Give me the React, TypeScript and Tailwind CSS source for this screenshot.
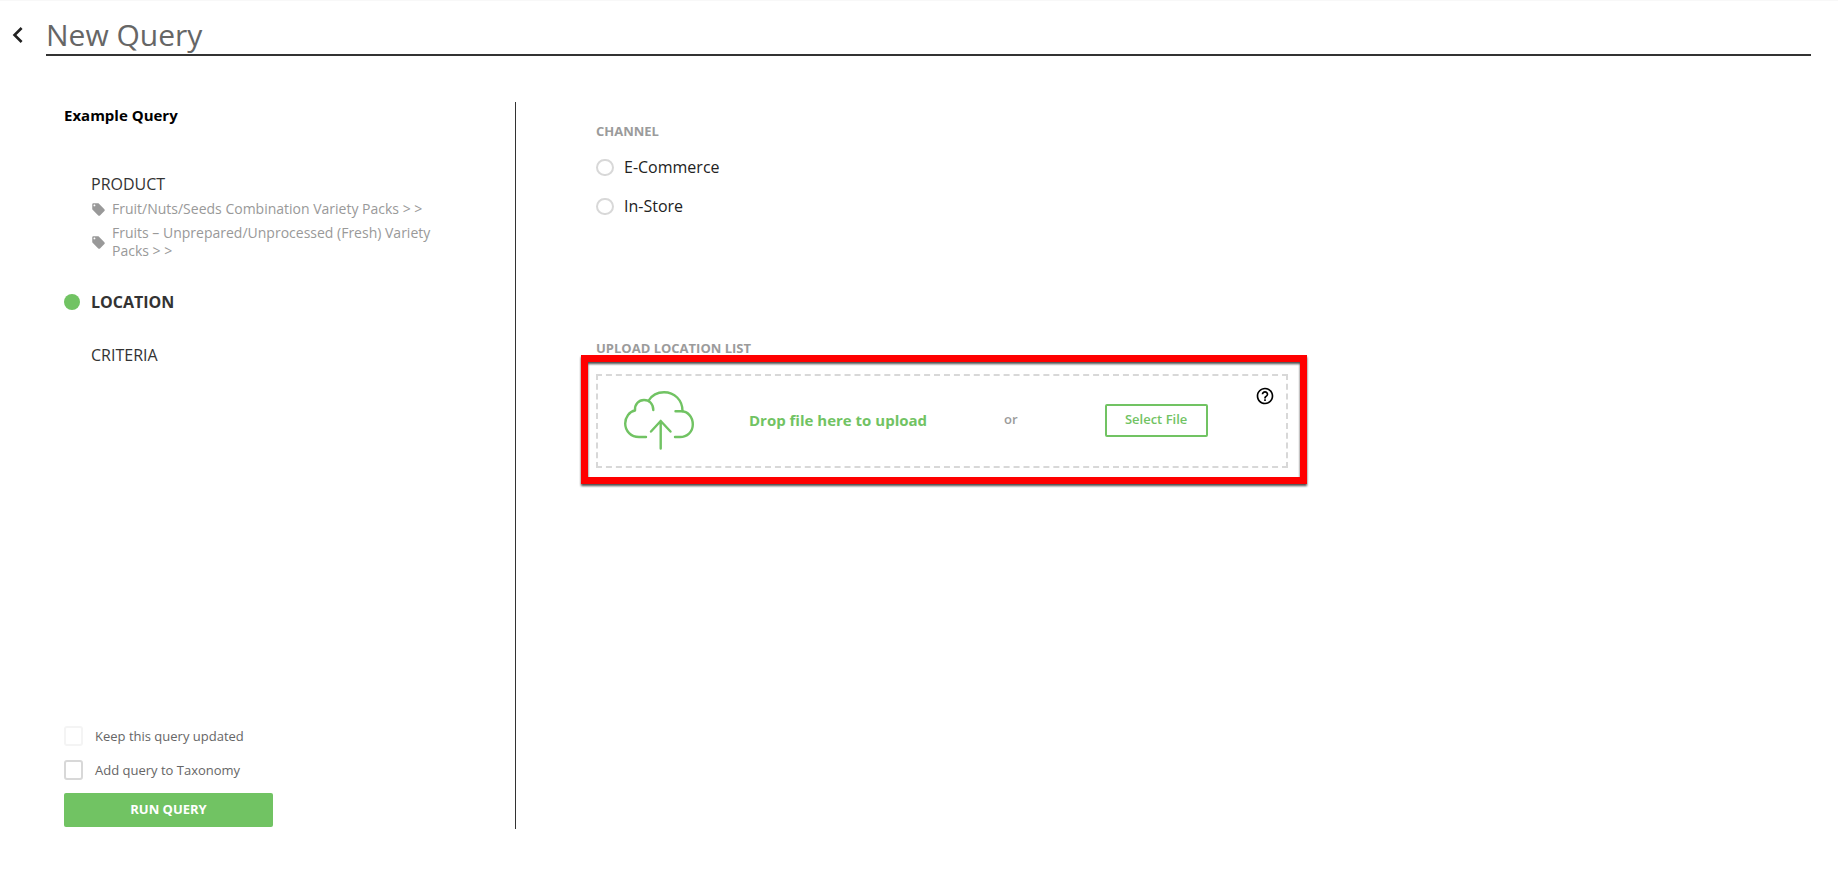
import type { FC, ReactNode } from "react";
import { MdChevronLeft, MdHelpOutline, MdLocalOffer } from "react-icons/md";

const CloudUploadIcon: FC = () => (
  <svg
    width="70"
    height="59"
    viewBox="0 0 70 59"
    fill="none"
    stroke="currentColor"
    strokeWidth="2.4"
    strokeLinecap="round"
    strokeLinejoin="round"
    aria-hidden="true"
  >
    <path d="M22 46H15C7 46 1.2 40 1.2 32.500C1.200 26 5.500 20.500 11 19.500C10.500 13.500 14.500 9 20 9C25.500 9 29.300 13 29.300 19" />
    <path d="M24.700 9.500C28 4 33.500 1.200 40 1.200C50.500 1.200 58.500 9 58.500 20" />
    <path d="M51.500 20.300H57C64 20.300 68.800 26 68.800 33.500C68.800 41 63 46 56 46H51" />
    <path d="M36.700 57.500V30M27 40.500L36.700 30L46.500 40.500" />
  </svg>
);

const SectionTitle: FC<{ children: ReactNode }> = ({ children }) => (
  <h2 className="text-[13px] leading-5 font-bold text-[#9b9b9b] uppercase">{children}</h2>
);

const Tag: FC<{ children: ReactNode }> = ({ children }) => (
  <li className="flex items-center gap-1.5 text-sm leading-[18px] text-[#999999]">
    <MdLocalOffer className="size-[15px] flex-none" />
    <span>{children}</span>
  </li>
);

const CheckOption: FC<{ label: string; disabled?: boolean }> = ({ label, disabled }) => (
  <label className="flex items-center gap-3 text-[13px] leading-5 text-[#666666]">
    <input
      type="checkbox"
      disabled={disabled}
      className="h-5 w-[19px] appearance-none rounded-[3px] border-2 border-[#d8d8d8] checked:bg-[#71c363] disabled:border-[#f4f4f4]"
    />
    {label}
  </label>
);

const RadioOption: FC<{ label: string }> = ({ label }) => (
  <label className="flex items-center gap-2.5 text-base leading-5 text-[#222222]">
    <input
      type="radio"
      name="channel"
      className="h-[17px] w-[18px] appearance-none rounded-full border-2 border-[#d8d8d8] checked:bg-[#71c363]"
    />
    {label}
  </label>
);

const Sidebar: FC = () => (
  <aside className="flex w-[470px] flex-none flex-col border-r border-[#333333] pr-20 pl-[18px]">
    <h2 className="mt-[3px] text-[15px] leading-5 font-bold text-black">Example Query</h2>

    <nav className="mt-[49px] text-base leading-5 text-[#333333]">
      <div className="pl-[27px]">
        <a href="#product">PRODUCT</a>
        <ul className="mt-1.5 flex flex-col gap-1.5">
          <Tag>Fruit/Nuts/Seeds Combination Variety Packs &gt; &gt;</Tag>
          <Tag>Fruits – Unprepared/Unprocessed (Fresh) Variety Packs &gt; &gt;</Tag>
        </ul>
      </div>
      <div className="mt-8 flex items-center gap-[11px]">
        <span className="size-4 rounded-full bg-[#71c363]" />
        <a href="#location" className="font-bold">
          LOCATION
        </a>
      </div>
      <div className="mt-[33px] pl-[27px]">
        <a href="#criteria">CRITERIA</a>
      </div>
    </nav>

    <div className="mt-auto flex flex-col items-start">
      <CheckOption label="Keep this query updated" disabled />
      <div className="mt-3.5">
        <CheckOption label="Add query to Taxonomy" />
      </div>
      <button
        type="button"
        className="mt-[13px] mb-0.5 h-[34px] w-[209px] rounded-xs bg-[#71c363] text-[13px] font-bold text-white"
      >
        RUN QUERY
      </button>
    </div>
  </aside>
);

const DropZone: FC = () => (
  <div className="relative mt-4 max-w-[692px]">
    <div className="flex h-[94px] items-center border-2 border-dashed border-[#d8d8d8] pb-0.5 pl-[26px] text-[#71c363]">
      <CloudUploadIcon />
      <p className="ml-[55px] text-[15px] font-bold">Drop file here to upload</p>
      <span className="ml-[77px] text-[13px] font-semibold text-[#9b9b9b]">or</span>
      <button
        type="button"
        className="ml-[87px] h-[33px] w-[103px] rounded-xs border-2 border-[#71c363] text-[13px] font-semibold"
      >
        Select File
      </button>
      <button type="button" aria-label="Help" className="mt-2.5 mr-[11px] ml-auto self-start text-black">
        <MdHelpOutline className="size-5" />
      </button>
    </div>
    <div className="pointer-events-none absolute -top-[19px] -right-[19px] -bottom-4 -left-[15px] border-7 border-[#ff0000] drop-shadow-[0_2px_1px_rgba(0,0,0,0.7)]" />
  </div>
);

export default function App() {
  return (
    <div className="flex min-h-screen flex-col border-t border-[#f8f8f8] bg-white pr-[27px] pb-10 font-['Open_Sans','Noto_Sans',sans-serif]">
      <header className="flex pt-[13px]">
        <button type="button" aria-label="Back" className="mt-[5px] mr-3 ml-0.5 size-8 text-[#222222]">
          <MdChevronLeft className="size-8" />
        </button>
        <h1 className="h-[42px] flex-1 border-b-2 border-[#333333] text-[30px] leading-[42px] text-[#666666]">New Query</h1>
      </header>

      <main className="mt-[46px] ml-[46px] flex flex-1">
        <Sidebar />
        <div className="flex-1 pt-[19px] pl-20">
          <section>
            <SectionTitle>Channel</SectionTitle>
            <div className="mt-4 flex flex-col items-start gap-[19px]">
              <RadioOption label="E-Commerce" />
              <RadioOption label="In-Store" />
            </div>
          </section>
          <section className="mt-[122px]">
            <SectionTitle>Upload Location List</SectionTitle>
            <DropZone />
          </section>
        </div>
      </main>
    </div>
  );
}
